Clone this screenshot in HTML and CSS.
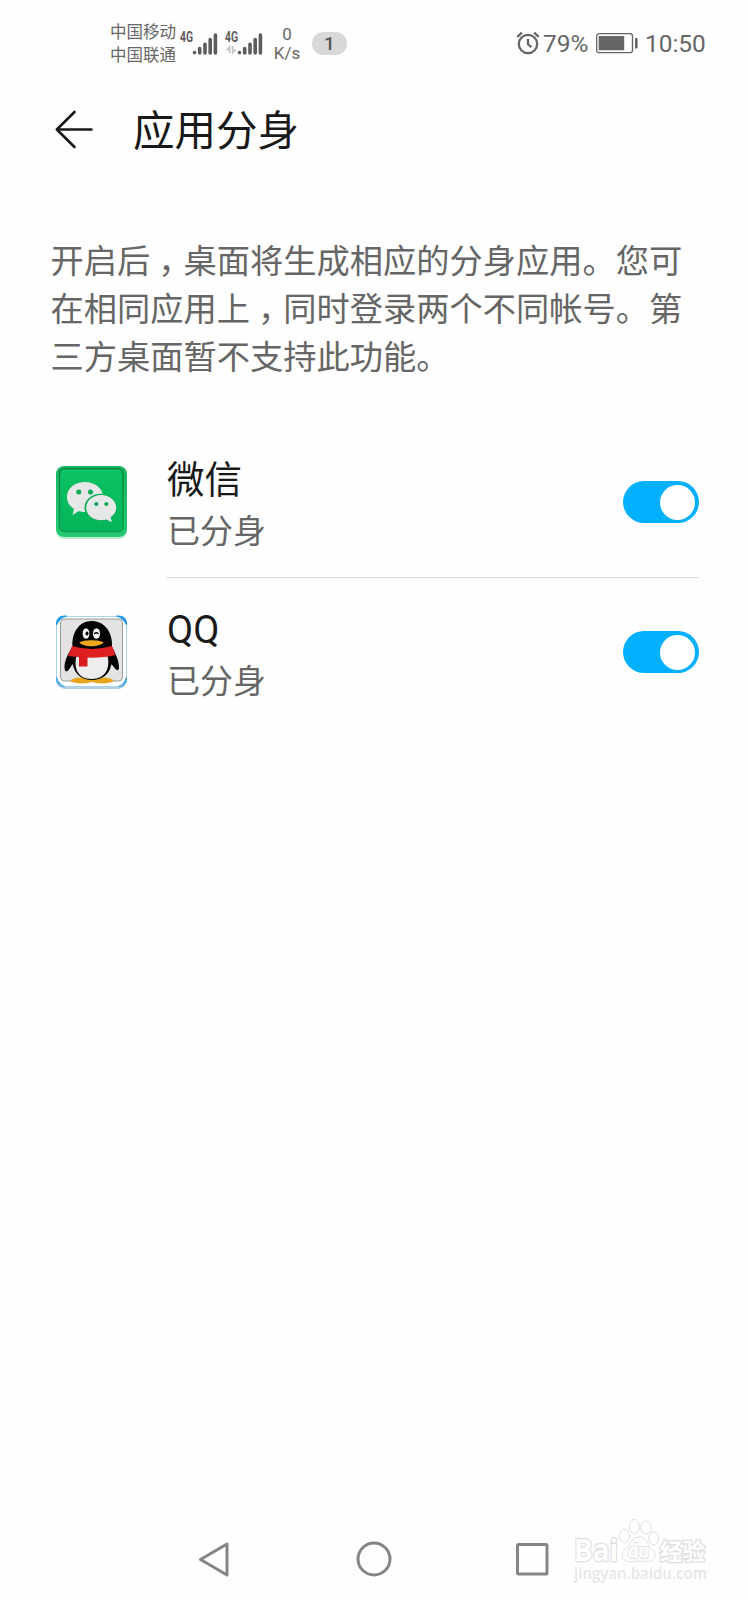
FILE: index.html
```html
<!DOCTYPE html>
<html lang="zh-CN">
<head>
<meta charset="utf-8">
<title>应用分身</title>
<link rel="stylesheet" href="styles.css">
</head>
<body>
<div class="screen">
  <header class="status">
    <div class="carriers"><span>中国移动</span><span>中国联通</span></div>
    <svg class="signals" width="84" height="28" viewBox="0 0 84 28">
      <g class="net"><text x="0" y="14" textLength="13" lengthAdjust="spacingAndGlyphs">4G</text><text x="45" y="14" textLength="13" lengthAdjust="spacingAndGlyphs">4G</text></g>
      <g class="bars">
        <path d="M14.5 24.5v.1M19.7 20.5v4.4M25 16.2v8.700M30.200 11.500v13.400M35.400 7v17.900"/>
        <path d="M59.500 24.500v.1M64.700 20.500v4.400M70 16.200v8.700M75.200 11.500v13.400M80.400 7v17.900"/>
      </g>
      <path class="arrows" d="M49.600 25v-6l-3 3.200M52.700 18v6.500l3-3.200"/>
    </svg>
    <div class="speed"><span>0</span><span>K/s</span></div>
    <div class="count">1</div>
    <svg class="alarm" width="24" height="24" viewBox="0 0 24 24">
      <circle cx="12" cy="13" r="9.200"/><path d="M12 8v5.300l3.400 2.800M1.300 6l4.500-4.300M22.700 6l-4.500-4.300"/>
    </svg>
    <span class="percent">79%</span>
    <svg class="battery" width="42" height="21" viewBox="0 0 42 21">
      <rect x=".7" y=".7" width="35.800" height="19" rx="2.500"/><path class="fill" d="M2.700 3h25.500v14.300H2.700zM39 5h1.600q1 0 1 1v8.500q0 1-1 1H39z"/>
    </svg>
    <time class="clock">10:50</time>
  </header>
  <div class="titlebar">
    <svg class="back" width="38" height="39" viewBox="0 0 38 39"><path d="M36.500 19.500H1.800M19.500 2L1.800 19.500L19.500 37"/></svg>
    <h1>应用分身</h1>
  </div>
  <p class="intro">开启后<span class="comma">，</span>桌面将生成相应的分身应用。您可<br>在相同应用上<span class="comma">，</span>同时登录两个不同帐号。第<br>三方桌面暂不支持此功能。</p>
  <main class="apps">
    <section class="app">
      <svg class="icon" width="74" height="76" viewBox="0 0 74 76">
        <defs><linearGradient id="rim" x2="0" y2="1"><stop stop-color="#18b862"/><stop offset="1" stop-color="#22c872"/></linearGradient>
        <linearGradient id="green" x2="0" y2="1"><stop stop-color="#0bc365"/><stop offset="1" stop-color="#05b459"/></linearGradient>
        <linearGradient id="edge" x2="0" y2="1"><stop stop-color="#067a3d"/><stop offset="1" stop-color="#0a9a4d"/></linearGradient></defs>
        <rect x="2" y="4" width="71" height="71" rx="8" fill="#bcebd0"/>
        <rect x="2" y="2" width="71" height="71" rx="8" fill="url(#rim)"/>
        <rect x="5.500" y="4.700" width="63.500" height="63" rx="5" fill="url(#green)" stroke="url(#edge)" stroke-width="1.300"/>
        <path d="M31 18c-10.500 0-18 6.600-18 15 0 5 2.500 9 7 12l-1.500 6 6-3.800c2 .6 4 .8 6.500.8 10 0 18-6.600 18-15S41 18 31 18z" fill="#e6e8e7"/>
        <ellipse cx="46.700" cy="43.500" rx="16.200" ry="13.800" fill="#0aae58"/>
        <path d="M47.200 31c-8.400 0-15 5.600-15 12.700s6.600 12.600 15 12.600c1.800 0 3.700-.3 5.200-.8l5.500 2.800-1.300-5c3.600-2.500 5.600-5.700 5.600-9.600 0-7.100-6.600-12.700-15-12.700z" fill="#e6e8e7"/>
        <g fill="#0aa956"><circle cx="24.800" cy="28" r="2.500"/><circle cx="36.500" cy="28" r="2.500"/><circle cx="42.300" cy="40" r="2.100"/><circle cx="52.300" cy="40" r="2.100"/></g>
      </svg>
      <div class="label"><h2>微信</h2><span>已分身</span></div>
      <div class="switch"><i></i></div>
    </section>
    <section class="app">
      <svg class="icon" width="74" height="76" viewBox="0 0 74 76">
        <rect x="2" y="4" width="71" height="71" rx="9" fill="#b2d0e4"/>
        <rect x="2.500" y="2.500" width="70" height="70" rx="8" fill="#fff" stroke="#a9d3ec"/>
        <path d="M2.500 11v-1q0-8 8-8h2q-7 2-10 9zM72.500 11v-1q0-8-8-8h-2q7 2 10 9z" fill="#2499e6" stroke="#2499e6"/>
        <path d="M2.500 63v2q0 7 8 7.500-6-2-8-9.500zM72.500 63v2q0 7-8 7.500 6-2 8-9.500z" fill="#4aabdf" stroke="#4aabdf"/>
        <rect x="6.500" y="5" width="62" height="62" rx="4" fill="#e4e3e4" stroke="#999" stroke-width="1"/>
        <g fill="#e7a51b"><ellipse cx="28" cy="66.500" rx="11.500" ry="3"/><ellipse cx="48" cy="66.500" rx="11.500" ry="3"/></g>
        <path d="M18.500 33c-1-15 7-26 19-26S59 17 58 33c3.500 6 7 14 7 20 0 4-2 4-4.500 1-2-3-2.500-3-3-4-2 11-10 16-19.500 16S21 61 18.500 50c-1 2-2.500 4-4 6-2.500 3-4 1-4-3C10.500 46 14.500 39 18.500 33z" fill="#030304"/>
        <path d="M23 40h30c4 13-1 25-15.500 25S19 53 23 40z" fill="#eeedee"/>
        <path d="M18 32q20 6 40 0l3.500 9q-19 5-47.500 1z" fill="#df2022"/><path d="M25 41h8.500v11.500H25z" fill="#d91a1e"/>
        <ellipse cx="32" cy="19.500" rx="3.400" ry="5.200" fill="#f3f3f3"/><ellipse cx="42.500" cy="19.500" rx="3.600" ry="5.200" fill="#f3f3f3"/>
        <ellipse cx="33" cy="19.500" rx="1.500" ry="2.100" fill="#000"/><path d="M40 20q2.500-2.500 4.500 0" fill="none" stroke="#111" stroke-width="1.300"/>
        <path d="M25.500 28.500c3-3 21-3 24 0-4 5-20 5-24 0z" fill="#edaa1f"/>
      </svg>
      <div class="label latin"><h2>QQ</h2><span>已分身</span></div>
      <div class="switch"><i></i></div>
    </section>
  </main>
  <nav class="nav">
    <svg width="32" height="36" viewBox="0 0 32 36"><path d="M29 3v31L2.500 18.500z"/></svg>
    <svg width="36" height="36" viewBox="0 0 36 36"><circle cx="18" cy="18" r="16"/></svg>
    <svg width="33" height="33" viewBox="0 0 33 33"><rect x="1.500" y="1.500" width="29.500" height="29.500" rx="1"/></svg>
  </nav>
  <svg class="watermark" width="148" height="72" viewBox="0 0 148 72">
    <g class="outline">
      <text class="brand" x="3" y="44" textLength="44" lengthAdjust="spacingAndGlyphs">Bai</text>
      <path d="M68 20c-7.500 0-9 8-13.500 12-6.500 6-2.500 13.500 5 12.700 6-.7 10-.7 16 0 8 1 12-7 5.500-12.700C76 27.500 75.500 20 68 20z"/>
      <ellipse cx="53.500" cy="18.800" rx="5" ry="6.500"/><ellipse cx="63.500" cy="9.500" rx="5" ry="7"/><ellipse cx="75" cy="10.500" rx="5.500" ry="6.500"/><ellipse cx="82.700" cy="21.500" rx="5" ry="6.500"/>
      <text class="du" x="57" y="41" textLength="21" lengthAdjust="spacingAndGlyphs">du</text>
      <text class="cn" x="89" y="43" textLength="45">经验</text>
    </g>
    <text class="site" x="3" y="62" textLength="133" lengthAdjust="spacingAndGlyphs">jingyan.baidu.com</text>
  </svg>
</div>
</body>
</html>
```
FILE: styles.css
```css
* { box-sizing: border-box; }
body { margin: 0; background: #fefefe; font-family: Roboto, "Noto Sans CJK SC", sans-serif; }
h1, h2, p { margin: 0; font-weight: 400; }
svg { display: block; flex: none; overflow: visible; }
.screen { position: relative; display: flex; flex-direction: column; width: 748px; height: 1600px; color: #191919; }
.status { display: flex; align-items: center; height: 88px; padding: 0 40px 0 110px; color: #666; }
.carriers { display: flex; flex-direction: column; width: 70px; font-size: 16.5px; line-height: 23px; white-space: nowrap; }
.signals { margin-bottom: 4px; }
.net { font: 700 15px Roboto, sans-serif; fill: #5c5c5c; }
.bars { fill: none; stroke: #5c5c5c; stroke-width: 3.6; stroke-linecap: round; }
.arrows { fill: none; stroke: #c5c5c5; stroke-width: 1.8; }
.speed { display: flex; flex-direction: column; align-items: center; width: 28px; margin-left: 9px; font-size: 17px; line-height: 19px; }
.count { width: 35px; height: 23px; margin: 0 0 2px 11px; border-radius: 12px; background: #d8d8d8; color: #555; font: 500 19px/23px Roboto, sans-serif; text-align: center; }
.alarm { margin: 0 0 3px auto; fill: none; stroke: #666; stroke-width: 2.3; }
.percent { width: 49px; margin: 0 0 1px 3px; font-size: 24.5px; }
.battery { margin: 0 0 2px 4px; fill: none; stroke: #666; stroke-width: 1.3; }
.battery .fill { fill: #666; stroke: none; }
.clock { width: 63px; margin: 0 0 1px 7px; font-size: 24.4px; }
.titlebar { display: flex; align-items: center; gap: 40px; height: 84px; padding-left: 55px; }
.back { margin-bottom: 2px; fill: none; stroke: #191919; stroke-width: 2.6; stroke-linecap: round; stroke-linejoin: round; }
h1 { padding-top: 4px; font-size: 41.5px; line-height: 60px; }
.intro { padding: 66px 0 0 50.5px; color: #666; font-size: 33.25px; line-height: 48px; white-space: nowrap; }
.comma { display: inline-block; width: 1em; padding-left: 8px; font-feature-settings: "halt"; }
.apps { margin-top: 46px; }
.app { display: flex; height: 150px; margin: 0 49px 0 54px; }
.icon { margin-top: 36px; }
.label { flex: 1; display: flex; flex-direction: column; margin: 0 -76px 0 38px; padding: 27px 0 0 1px; border-bottom: 1.5px solid #dcdcdc; }
.label h2 { font-size: 37.5px; line-height: 51px; }
.label span { color: #666; font-size: 33px; line-height: 52px; }
.label.latin { border-color: transparent; }
.label.latin h2 { font-size: 38px; }
.switch { width: 76px; height: 42px; margin-top: 53px; padding: 3.5px 4px; border-radius: 21px; background: #03b0fe; }
.switch i { display: block; width: 35px; height: 35px; margin-left: auto; border-radius: 50%; background: #fff; }
.nav { display: flex; align-items: center; margin-top: auto; height: 82px; padding: 0 0 0 198px; }
.nav svg { fill: none; stroke: #858585; stroke-width: 3; stroke-linejoin: round; }
.nav svg + svg { margin-left: 126px; }
.nav svg:last-child { margin-left: 124px; }
.watermark { position: absolute; left: 571px; top: 1517px; }
.outline { fill: #fefefe; stroke: #e0e0e0; stroke-width: 1; }
.brand { font: 700 31px "Open Sans", sans-serif; paint-order: stroke; stroke-width: 2.5; }
.du { font: 700 20px "Open Sans", sans-serif; paint-order: stroke; stroke-width: 2; }
.cn { font: 700 22.5px "Noto Sans CJK SC", sans-serif; paint-order: stroke; stroke-width: 2.5; }
.site { font: 600 15.5px "Open Sans", sans-serif; fill: #e7e7e7; }
```
